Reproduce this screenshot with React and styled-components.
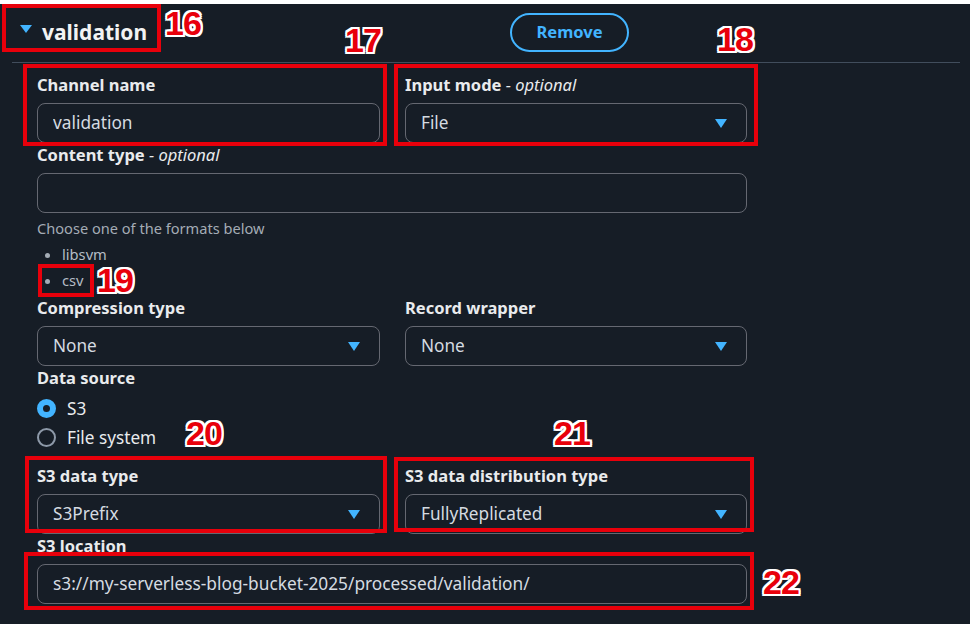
import React from "react";
import styled, { createGlobalStyle } from "styled-components";

const GlobalStyle = createGlobalStyle`
  * { box-sizing: border-box; }
  body {
    margin: 0;
    background: #ffffff;
  }
`;

const annotations = [
  { n: "16", box: [2, 4, 159, 48], label: [165, 9] },
  { n: "17", box: [23, 64, 364, 82], label: [345, 26] },
  { n: "18", box: [394, 64, 364, 82], label: [717, 25] },
  { n: "19", box: [38, 264, 56, 33], label: [97, 266] },
  { n: "20", box: [25, 456, 362, 77], label: [186, 419] },
  { n: "21", box: [394, 457, 360, 75], label: [554, 419] },
  { n: "22", box: [24, 552, 730, 58], label: [763, 568] },
];

export default function App() {
  return (
    <Frame>
      <GlobalStyle />
      <Panel>
        <Header>
          <Heading>
            <Caret viewBox="0 0 12 8">
              <path d="M0 0h12L6 8z" fill="#42b4ff" />
            </Caret>
            validation
          </Heading>
          <RemoveButton>Remove</RemoveButton>
        </Header>

        <Body>
          <Row>
            <Field>
              <Label>Channel name</Label>
              <TextInput readOnly value="validation" />
            </Field>
            <Field>
              <Label>
                Input mode <Optional>- optional</Optional>
              </Label>
              <Select value="File" />
            </Field>
          </Row>

          <Field $top={1}>
            <Label>
              Content type <Optional>- optional</Optional>
            </Label>
            <TextInput readOnly value="" />
          </Field>
          <Hint>Choose one of the formats below</Hint>
          <Formats>
            <li>libsvm</li>
            <li>csv</li>
          </Formats>

          <Row $top={4}>
            <Field>
              <Label>Compression type</Label>
              <Select value="None" />
            </Field>
            <Field>
              <Label>Record wrapper</Label>
              <Select value="None" />
            </Field>
          </Row>

          <Field $top={1}>
            <Label>Data source</Label>
            <RadioGroup>
              <RadioRow>
                <Radio $checked />
                S3
              </RadioRow>
              <RadioRow>
                <Radio />
                File system
              </RadioRow>
            </RadioGroup>
          </Field>

          <Row $top={13}>
            <Field>
              <Label>S3 data type</Label>
              <Select value="S3Prefix" />
            </Field>
            <Field>
              <Label>S3 data distribution type</Label>
              <Select value="FullyReplicated" />
            </Field>
          </Row>

          <Field $top={1}>
            <Label>S3 location</Label>
            <TextInput
              readOnly
              value="s3://my-serverless-blog-bucket-2025/processed/validation/"
            />
          </Field>
        </Body>
      </Panel>

      {annotations.map((a) => (
        <React.Fragment key={a.n}>
          <MarkBox $x={a.box[0]} $y={a.box[1]} $w={a.box[2]} $h={a.box[3]} />
          <MarkNumber $x={a.label[0]} $y={a.label[1]}>
            {a.n}
          </MarkNumber>
        </React.Fragment>
      ))}
    </Frame>
  );
}

function Select({ value }) {
  return (
    <SelectBox>
      <span>{value}</span>
      <Arrow viewBox="0 0 12 9">
        <path d="M0 0h12L6 9z" fill="#42b4ff" />
      </Arrow>
    </SelectBox>
  );
}

const Frame = styled.div`
  position: relative;
  width: 973px;
  height: 624px;
  overflow: hidden;
`;

const Panel = styled.div`
  margin: 4px 3px 0 0;
  height: 620px;
  background: #161d26;
  color: #e9ebed;
  font-family: "Noto Sans", "Open Sans", sans-serif;
`;

const Header = styled.div`
  display: grid;
  grid-template-columns: 490px auto;
  align-items: center;
  height: 59px;
  margin: 0 10px 0 12px;
  padding: 0 0 2px 8px;
  border-bottom: 1px solid #414d5c;
`;

const Heading = styled.h2`
  display: flex;
  align-items: center;
  gap: 10px;
  margin: 0;
  font-size: 21px;
  font-weight: 700;
  line-height: 24px;
  color: #f2f3f3;
`;

const Caret = styled.svg`
  width: 12px;
  height: 8px;
  margin-top: -6px;
`;

const RemoveButton = styled.button`
  justify-self: start;
  width: 119px;
  height: 39px;
  padding: 0 0 2px;
  border: 2px solid #42b4ff;
  border-radius: 20px;
  background: transparent;
  color: #42b4ff;
  font-family: inherit;
  font-size: 16.5px;
  font-weight: 700;
  cursor: pointer;
`;

const Body = styled.div`
  width: 747px;
  padding: 11px 0 0 37px;
`;

const Row = styled.div`
  display: grid;
  grid-template-columns: 343px 342px;
  column-gap: 25px;
  margin-top: ${(p) => p.$top || 0}px;
`;

const Field = styled.div`
  display: flex;
  flex-direction: column;
  margin-top: ${(p) => p.$top || 0}px;
`;

const Label = styled.label`
  font-size: 16.5px;
  font-weight: 700;
  line-height: 22px;
  margin-bottom: 7px;
  color: #e9ebed;
`;

const Optional = styled.i`
  font-weight: 400;
`;

const TextInput = styled.input`
  height: 40px;
  width: 100%;
  padding: 0 15px 2px;
  border: 1px solid #656871;
  border-radius: 8px;
  background: transparent;
  color: #d5dbe1;
  font-family: inherit;
  font-size: 17.3px;
  outline: none;
`;

const SelectBox = styled.div`
  display: flex;
  align-items: center;
  justify-content: space-between;
  height: 40px;
  padding: 0 19px 2px 15px;
  border: 1px solid #656871;
  border-radius: 8px;
  color: #d5dbe1;
  font-size: 17.2px;
`;

const Arrow = styled.svg`
  width: 12px;
  height: 9px;
  margin-top: 2px;
`;

const Hint = styled.div`
  margin-top: 5px;
  font-size: 14.6px;
  line-height: 20px;
  color: #a4acb5;
`;

const Formats = styled.ul`
  margin: 3px 0 0;
  padding-left: 25px;
  font-size: 14.7px;
  line-height: 26px;
  color: #b4bcc5;

  li::marker {
    color: #a4acb5;
  }
`;

const RadioGroup = styled.div`
  display: flex;
  flex-direction: column;
  margin-top: -2px;
`;

const RadioRow = styled.div`
  display: flex;
  align-items: center;
  gap: 11px;
  height: 29px;
  font-size: 17.2px;
  color: #e9ebed;
`;

const Radio = styled.span`
  width: 19px;
  height: 19px;
  border-radius: 50%;
  background: #161d26;
  border: ${(p) => (p.$checked ? "6px solid #42b4ff" : "2px solid #8d99a8")};
`;

const MarkBox = styled.div`
  position: absolute;
  left: ${(p) => p.$x}px;
  top: ${(p) => p.$y}px;
  width: ${(p) => p.$w}px;
  height: ${(p) => p.$h}px;
  border: 4px solid #e8000b;
  pointer-events: none;
`;

const MarkNumber = styled.div`
  position: absolute;
  left: ${(p) => p.$x}px;
  top: ${(p) => p.$y}px;
  font-family: "Liberation Sans", Arial, sans-serif;
  font-size: 34px;
  font-weight: 700;
  line-height: 28px;
  letter-spacing: -1px;
  color: #e8000b;
  text-shadow: 2px 0 #fff, -2px 0 #fff, 0 2px #fff, 0 -2px #fff,
    2px 2px #fff, -2px -2px #fff, 2px -2px #fff, -2px 2px #fff,
    0 0 3px rgba(0, 0, 0, 0.4);
`;
